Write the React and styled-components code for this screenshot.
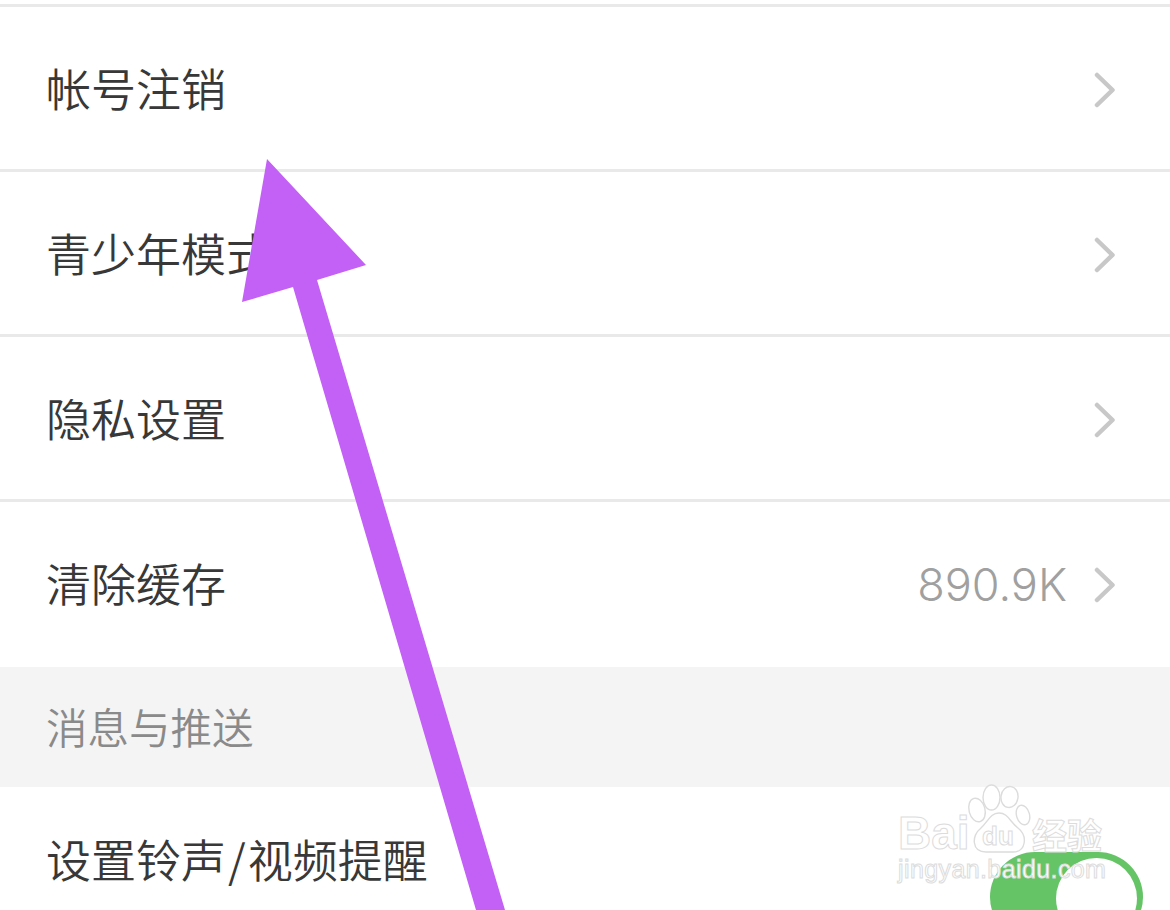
import React from 'react';
import styled, { createGlobalStyle } from 'styled-components';

const CJK = '"Noto Sans CJK SC", "Noto Sans", sans-serif';

const GlobalStyle = createGlobalStyle`
  html, body {
    margin: 0;
    padding: 0;
    background: #fff;
  }
`;

const Page = styled.div`
  position: relative;
  width: 1170px;
  height: 910px;
  overflow: hidden;
  background: #fff;
  padding-top: 4px;
  box-sizing: border-box;
  font-family: ${CJK};
`;

const Row = styled.div`
  height: 165px;
  box-sizing: border-box;
  border-top: 3px solid #e9e9e9;
  padding: 3px 54px 0 46px;
  display: flex;
  align-items: center;
  justify-content: space-between;
`;

const LastRow = styled(Row)`
  height: 168px;
  padding-top: 0;
`;

const Label = styled.div`
  font-size: 45px;
  font-weight: 350;
  color: #383838;
  line-height: 1;
  padding-bottom: 4px;
`;

const Slash = styled.span`
  margin: 0 2px;
`;

const Right = styled.div`
  display: flex;
  align-items: center;
  gap: 27px;
`;

const Size = styled.span`
  font-family: Inter, "Liberation Sans", sans-serif;
  font-size: 45px;
  font-weight: 300;
  color: #a0a0a0;
  line-height: 1;
`;

const SectionHead = styled.div`
  height: 120px;
  box-sizing: border-box;
  background: #f4f4f4;
  padding: 0 0 2px 46px;
  display: flex;
  align-items: center;
  font-size: 41.5px;
  font-weight: 350;
  color: #8a8a8a;
`;

const ToggleRow = styled.div`
  height: 150px;
  padding: 49px 27px 0 46px;
  display: flex;
  justify-content: space-between;
  align-items: flex-start;
`;

const Toggle = styled.div`
  width: 153px;
  height: 90px;
  margin-top: 16px;
  border-radius: 45px;
  background: #65c466;
  position: relative;
  flex: none;
`;

const Knob = styled.div`
  position: absolute;
  left: 66px;
  top: 6px;
  width: 81px;
  height: 81px;
  border-radius: 50%;
  background: #fff;
`;

const Arrow = styled.svg`
  position: absolute;
  left: 0;
  top: 0;
`;

const Watermark = styled.div`
  position: absolute;
  left: 896px;
  top: 783px;
  width: 215px;
  height: 110px;
  color: #fff;
  -webkit-text-stroke: 1px #dcdcdc;
`;

const Paw = styled.svg`
  position: absolute;
  left: 70px;
  top: 0;
`;

const WordBai = styled.span`
  position: absolute;
  left: 2px;
  top: 27px;
  font-family: "Liberation Sans", sans-serif;
  font-size: 46px;
  font-weight: 700;
  line-height: 1;
`;

const WordDu = styled.span`
  position: absolute;
  left: 86px;
  top: 40px;
  font-family: "Liberation Sans", sans-serif;
  font-size: 26px;
  font-weight: 700;
  line-height: 1;
`;

const WordJy = styled.span`
  position: absolute;
  left: 136px;
  top: 33px;
  font-size: 35px;
  font-weight: 700;
  line-height: 1;
  white-space: nowrap;
`;

const Url = styled.span`
  position: absolute;
  left: 2px;
  top: 74px;
  font-family: "Liberation Sans", sans-serif;
  font-size: 25px;
  line-height: 1;
  letter-spacing: 0.4px;
  white-space: nowrap;
`;

const Chevron = () => (
  <svg width="22" height="36" viewBox="0 0 22 36" fill="none">
    <path d="M3 3 L18.5 18 L3 33" stroke="#c8c8c8" strokeWidth="4.5" strokeLinecap="round" strokeLinejoin="round" />
  </svg>
);

const items = ['帐号注销', '青少年模式', '隐私设置'];

export default function App() {
  return (
    <Page>
      <GlobalStyle />
      {items.map((t) => (
        <Row key={t}>
          <Label>{t}</Label>
          <Chevron />
        </Row>
      ))}
      <LastRow>
        <Label>清除缓存</Label>
        <Right>
          <Size>890.9K</Size>
          <Chevron />
        </Right>
      </LastRow>
      <SectionHead>消息与推送</SectionHead>
      <ToggleRow>
        <Label>设置铃声<Slash>/</Slash>视频提醒</Label>
        <Toggle>
          <Knob />
        </Toggle>
      </ToggleRow>
      <Watermark>
        <Paw width="70" height="75" viewBox="0 0 70 75" fill="#fff" stroke="#dcdcdc" strokeWidth="1.4">
          <ellipse cx="11" cy="27" rx="8" ry="12" transform="rotate(-15 11 27)" />
          <ellipse cx="25.5" cy="14.5" rx="8.5" ry="12.5" />
          <ellipse cx="43.5" cy="14" rx="8.5" ry="10.5" transform="rotate(8 43.5 14)" />
          <ellipse cx="57" cy="32" rx="6.5" ry="10" transform="rotate(-15 57 32)" />
          <path d="M33 30 C24 30 22 39 14 46 C6 52 5 69 20 69 C28 69 38 69 47 69 C60 69 62 53 52 45 C44 39 42 30 33 30 Z" />
        </Paw>
        <WordBai>Bai</WordBai>
        <WordDu>du</WordDu>
        <WordJy>经验</WordJy>
        <Url>jingyan.baidu.com</Url>
      </Watermark>
      <Arrow width="1170" height="910" viewBox="0 0 1170 910">
        <path d="M267 159 L366 265 L317 280 L505 910 L476 910 L293 287 L242 302 Z" fill="#c360f5" />
      </Arrow>
    </Page>
  );
}
